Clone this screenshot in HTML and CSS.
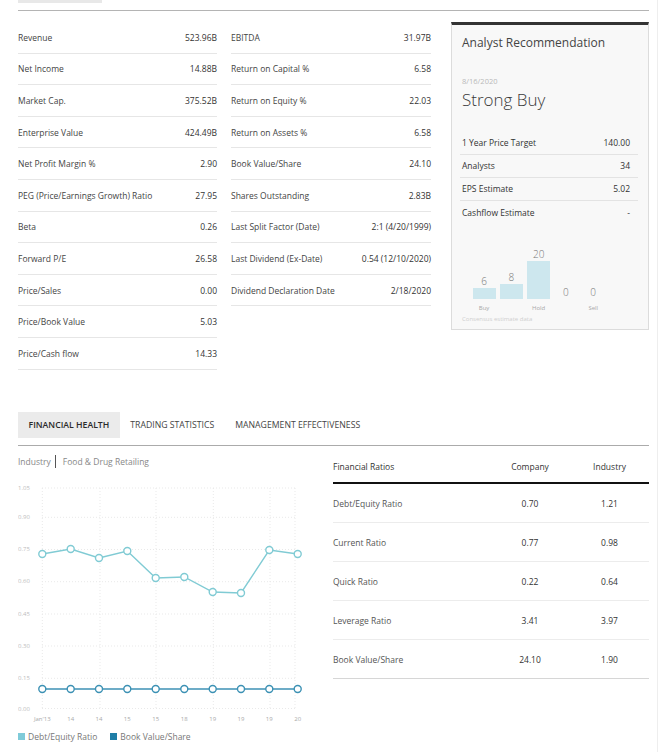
FILE: index.html
```html
<!DOCTYPE html>
<html lang="en">
<head>
<meta charset="utf-8">
<title>Key Statistics</title>
<link rel="stylesheet" href="styles.css">
</head>
<body>
<div class="frame">
  <div class="page">
    <div class="top-tab"></div>
    <div class="top-rule"></div>

    <section class="stats">
      <div class="col col-left">
        <div class="row"><span>Revenue</span><span class="val">523.96B</span></div>
        <div class="row"><span>Net Income</span><span class="val">14.88B</span></div>
        <div class="row"><span>Market Cap.</span><span class="val">375.52B</span></div>
        <div class="row"><span>Enterprise Value</span><span class="val">424.49B</span></div>
        <div class="row"><span>Net Profit Margin %</span><span class="val">2.90</span></div>
        <div class="row"><span>PEG (Price/Earnings Growth) Ratio</span><span class="val">27.95</span></div>
        <div class="row"><span>Beta</span><span class="val">0.26</span></div>
        <div class="row"><span>Forward P/E</span><span class="val">26.58</span></div>
        <div class="row"><span>Price/Sales</span><span class="val">0.00</span></div>
        <div class="row"><span>Price/Book Value</span><span class="val">5.03</span></div>
        <div class="row"><span>Price/Cash flow</span><span class="val">14.33</span></div>
      </div>
      <div class="col col-mid">
        <div class="row"><span>EBITDA</span><span class="val">31.97B</span></div>
        <div class="row"><span>Return on Capital %</span><span class="val">6.58</span></div>
        <div class="row"><span>Return on Equity %</span><span class="val">22.03</span></div>
        <div class="row"><span>Return on Assets %</span><span class="val">6.58</span></div>
        <div class="row"><span>Book Value/Share</span><span class="val">24.10</span></div>
        <div class="row"><span>Shares Outstanding</span><span class="val">2.83B</span></div>
        <div class="row"><span>Last Split Factor (Date)</span><span class="val">2:1 (4/20/1999)</span></div>
        <div class="row"><span>Last Dividend (Ex-Date)</span><span class="val">0.54 (12/10/2020)</span></div>
        <div class="row"><span>Dividend Declaration Date</span><span class="val">2/18/2020</span></div>
      </div>

      <aside class="analyst">
        <h2 class="an-title">Analyst Recommendation</h2>
        <div class="an-date">8/16/2020</div>
        <div class="an-rating">Strong Buy</div>
        <div class="an-rows">
          <div class="an-row"><span>1 Year Price Target</span><span>140.00</span></div>
          <div class="an-row"><span>Analysts</span><span>34</span></div>
          <div class="an-row"><span>EPS Estimate</span><span>5.02</span></div>
          <div class="an-row last"><span>Cashflow Estimate</span><span>-</span></div>
        </div>
        <div class="bars">
          <div class="bar-col"><span class="bar-num">6</span><div class="bar" style="height:11px"></div></div>
          <div class="bar-col"><span class="bar-num">8</span><div class="bar" style="height:15px"></div></div>
          <div class="bar-col"><span class="bar-num">20</span><div class="bar" style="height:38px"></div></div>
          <div class="bar-col"><span class="bar-num">0</span><div class="bar" style="height:0px"></div></div>
          <div class="bar-col"><span class="bar-num">0</span><div class="bar" style="height:0px"></div></div>
        </div>
        <div class="bar-labels">
          <span>Buy</span><span></span><span>Hold</span><span></span><span>Sell</span>
        </div>
        <div class="consensus">Consensus estimate data</div>
      </aside>
    </section>

    <nav class="tabs">
      <span class="tab active">Financial Health</span>
      <span class="tab">Trading Statistics</span>
      <span class="tab">Management Effectiveness</span>
    </nav>

    <section class="health">
      <div class="chart-col">
        <div class="industry"><span class="ind-label">Industry</span><span class="ind-name">Food &amp; Drug Retailing</span></div>
        <svg class="chart" width="292" height="252" viewBox="0 0 292 252">
          <g class="grid">
            <line x1="24" y1="16" x2="279" y2="16"/>
            <line x1="24" y1="45.3" x2="279" y2="45.3"/>
            <line x1="24" y1="77.5" x2="279" y2="77.5"/>
            <line x1="24" y1="109.7" x2="279" y2="109.7"/>
            <line x1="24" y1="142" x2="279" y2="142"/>
            <line x1="24" y1="174" x2="279" y2="174"/>
            <line x1="24" y1="206.3" x2="279" y2="206.3"/>
            <line x1="24" y1="236.5" x2="279" y2="236.5"/>
            <line x1="24.3" y1="16" x2="24.3" y2="236"/>
            <line x1="82" y1="16" x2="82" y2="236"/>
            <line x1="138" y1="16" x2="138" y2="236"/>
            <line x1="195.3" y1="16" x2="195.3" y2="236"/>
            <line x1="252" y1="16" x2="252" y2="236"/>
            <line x1="277" y1="16" x2="277" y2="236"/>
          </g>
          <g class="ylab">
            <text x="0" y="16">1.05</text>
            <text x="0" y="45.3">0.90</text>
            <text x="0" y="77.5">0.75</text>
            <text x="0" y="109.7">0.60</text>
            <text x="0" y="142">0.45</text>
            <text x="0" y="174">0.30</text>
            <text x="0" y="206.3">0.15</text>
            <text x="0" y="237">0.00</text>
          </g>
          <polyline class="line-de" points="24.3,82 52.7,77 81,86 109.3,79 137.7,106 166.3,105 194.7,120 223,121 251.3,78 279.7,82"/>
          <g class="dot-de">
            <circle cx="24.3" cy="82" r="3.5"/>
            <circle cx="52.7" cy="77" r="3.5"/>
            <circle cx="81" cy="86" r="3.5"/>
            <circle cx="109.3" cy="79" r="3.5"/>
            <circle cx="137.7" cy="106" r="3.5"/>
            <circle cx="166.3" cy="105" r="3.5"/>
            <circle cx="194.7" cy="120" r="3.5"/>
            <circle cx="223" cy="121" r="3.5"/>
            <circle cx="251.3" cy="78" r="3.5"/>
            <circle cx="279.7" cy="82" r="3.5"/>
          </g>
          <polyline class="line-bv" points="24.3,217 279.7,217"/>
          <g class="dot-bv">
            <circle cx="24.3" cy="217" r="3.5"/>
            <circle cx="52.7" cy="217" r="3.5"/>
            <circle cx="81" cy="217" r="3.5"/>
            <circle cx="109.3" cy="217" r="3.5"/>
            <circle cx="137.7" cy="217" r="3.5"/>
            <circle cx="166.3" cy="217" r="3.5"/>
            <circle cx="194.7" cy="217" r="3.5"/>
            <circle cx="223" cy="217" r="3.5"/>
            <circle cx="251.3" cy="217" r="3.5"/>
            <circle cx="279.7" cy="217" r="3.5"/>
          </g>
          <g class="xlab">
            <text x="24.3" y="247">Jan'13</text>
            <text x="52.7" y="247">14</text>
            <text x="81" y="247">14</text>
            <text x="109.3" y="247">15</text>
            <text x="137.7" y="247">15</text>
            <text x="166.3" y="247">18</text>
            <text x="194.7" y="247">19</text>
            <text x="223" y="247">19</text>
            <text x="251.3" y="247">19</text>
            <text x="279.7" y="247">20</text>
          </g>
        </svg>
        <div class="legend">
          <span class="sw sw-de"></span><span class="lg-text">Debt/Equity Ratio</span>
          <span class="sw sw-bv"></span><span class="lg-text">Book Value/Share</span>
        </div>
      </div>

      <div class="ratios">
        <div class="r-row r-head"><span>Financial Ratios</span><span class="c">Company</span><span class="c">Industry</span></div>
        <div class="r-row"><span class="lbl">Debt/Equity Ratio</span><span class="c">0.70</span><span class="c">1.21</span></div>
        <div class="r-row"><span class="lbl">Current Ratio</span><span class="c">0.77</span><span class="c">0.98</span></div>
        <div class="r-row"><span class="lbl">Quick Ratio</span><span class="c">0.22</span><span class="c">0.64</span></div>
        <div class="r-row"><span class="lbl">Leverage Ratio</span><span class="c">3.41</span><span class="c">3.97</span></div>
        <div class="r-row last"><span class="lbl">Book Value/Share</span><span class="c">24.10</span><span class="c">1.90</span></div>
      </div>
    </section>
  </div>
</div>
</body>
</html>
```

FILE: styles.css
```css
html, body {
  margin: 0;
  padding: 0;
  background: #fff;
}

body {
  font-family: "Open Sans", "Liberation Sans", sans-serif;
  font-size: 8.5px;
  color: #333;
}

.frame {
  width: 657px;
  min-height: 752px;
  border-right: 1px solid #eeeeee;
}

.page {
  padding-left: 18px;
  width: 631px;
}

.top-tab {
  width: 84px;
  height: 3px;
  background: #e8e8e8;
}

.top-rule {
  margin-top: 7px;
  border-top: 1px solid #b4b4b4;
}

/* ---------- key stats ---------- */
.stats {
  display: flex;
  align-items: flex-start;
  margin-top: 11px;
}

.col-left { width: 199px; }
.col-mid { width: 200px; margin-left: 14px; }

.row {
  display: flex;
  justify-content: space-between;
  align-items: center;
  height: 30.6px;
  border-bottom: 1px solid #e6e6e6;
  color: #444;
  white-space: nowrap;
}

.row .val { color: #333; }

/* ---------- analyst box ---------- */
.analyst {
  box-sizing: border-box;
  width: 198px;
  margin-left: 20px;
  background: #f8f8f8;
  border: 1px solid #dcdcdc;
  border-top: 3px solid #333;
  padding: 10px 10px 6px 8px;
}

.an-title {
  margin: 0;
  padding-left: 2px;
  font-size: 12px;
  line-height: 16px;
  font-weight: 400;
  color: #444;
}

.an-date {
  margin-top: 25px;
  padding-left: 2px;
  font-size: 7.5px;
  line-height: 10px;
  color: #b8b8b8;
}

.an-rating {
  margin-top: 3px;
  padding-left: 2px;
  font-size: 17px;
  line-height: 22px;
  font-weight: 300;
  color: #3a3a3a;
}

.an-rows { margin-top: 20.5px; }

.an-row {
  display: flex;
  justify-content: space-between;
  align-items: center;
  height: 22px;
  padding: 0 8px 0 2px;
  border-bottom: 1px solid #e3e3e3;
  color: #333;
}

.an-row.last {
  border-bottom: none;
  height: 23px;
}

.bars {
  display: flex;
  align-items: flex-end;
  height: 75px;
  margin-left: 10.4px;
}

.bar-col {
  width: 27.3px;
  display: flex;
  flex-direction: column;
  align-items: center;
}

.bar-num {
  font-size: 10px;
  line-height: 12px;
  margin-bottom: 1px;
  color: #777;
  font-weight: 300;
}

.bar {
  width: 23px;
  background: #cde7ee;
}

.bar-labels {
  display: flex;
  margin-left: 10.4px;
  margin-top: 5px;
}

.bar-labels span {
  width: 27.3px;
  text-align: center;
  font-size: 6px;
  line-height: 8px;
  color: #a8a8a8;
}

.consensus {
  margin-top: 3px;
  padding-left: 2px;
  font-size: 6px;
  line-height: 8px;
  color: #cfcfcf;
}

/* ---------- tabs ---------- */
.tabs {
  display: flex;
  margin-top: 42px;
  padding-bottom: 7px;
  border-bottom: 1px solid #ababab;
}

.tab {
  height: 26px;
  line-height: 26px;
  padding: 0 10.5px;
  font-size: 8.7px;
  text-transform: uppercase;
  color: #444;
}

.tab.active {
  background: #ebebeb;
  font-weight: 600;
  color: #2a2a2a;
}

/* ---------- financial health ---------- */
.health {
  display: flex;
  align-items: flex-start;
}

.chart-col { width: 292px; }

.industry {
  display: flex;
  align-items: center;
  padding-top: 10px;
  height: 12px;
  color: #888;
}

.ind-label {
  padding-right: 4px;
  border-right: 1.5px solid #555;
  line-height: 13px;
}

.ind-name { padding-left: 7px; }

.chart {
  display: block;
  margin-top: 4px;
}

.grid line {
  stroke: #e9e9e9;
  stroke-width: 1;
  stroke-dasharray: 1 2;
}

.ylab text {
  font-family: "Open Sans", "Liberation Sans", sans-serif;
  font-size: 6px;
  fill: #bdbdbd;
  dominant-baseline: middle;
}

.xlab text {
  font-family: "Open Sans", "Liberation Sans", sans-serif;
  font-size: 6px;
  fill: #a9a9a9;
  text-anchor: middle;
  dominant-baseline: middle;
}

.line-de {
  fill: none;
  stroke: #80cbd4;
  stroke-width: 1.4;
}

.dot-de circle {
  fill: #fff;
  stroke: #80cbd4;
  stroke-width: 1.4;
}

.line-bv {
  fill: none;
  stroke: #3c91b4;
  stroke-width: 1.4;
}

.dot-bv circle {
  fill: #fff;
  stroke: #3c91b4;
  stroke-width: 1.4;
}

.legend {
  display: flex;
  align-items: center;
  margin-top: 8px;
  height: 10px;
  color: #777;
}

.sw {
  width: 7px;
  height: 7px;
  margin-right: 3px;
}

.sw-de { background: #7fcbd9; }
.sw-bv { background: #1f7ea7; margin-left: 13px; }

.lg-text { font-size: 8.5px; line-height: 10px; }

/* ---------- ratios table ---------- */
.ratios {
  width: 316px;
  margin-left: 23px;
}

.r-row {
  display: grid;
  grid-template-columns: 157px 80px 79px;
  align-items: center;
  height: 38px;
  padding-top: 1px;
  box-sizing: border-box;
  height: 39px;
  border-bottom: 1px solid #ececec;
}

.r-row .c {
  text-align: center;
  color: #333;
}

.r-row .lbl { color: #555; }

.r-row.last { border-bottom-color: #d6d6d6; }

.r-head {
  height: 38px;
  padding-top: 6px;
  border-bottom: 2px solid #111;
  color: #333;
}
```
